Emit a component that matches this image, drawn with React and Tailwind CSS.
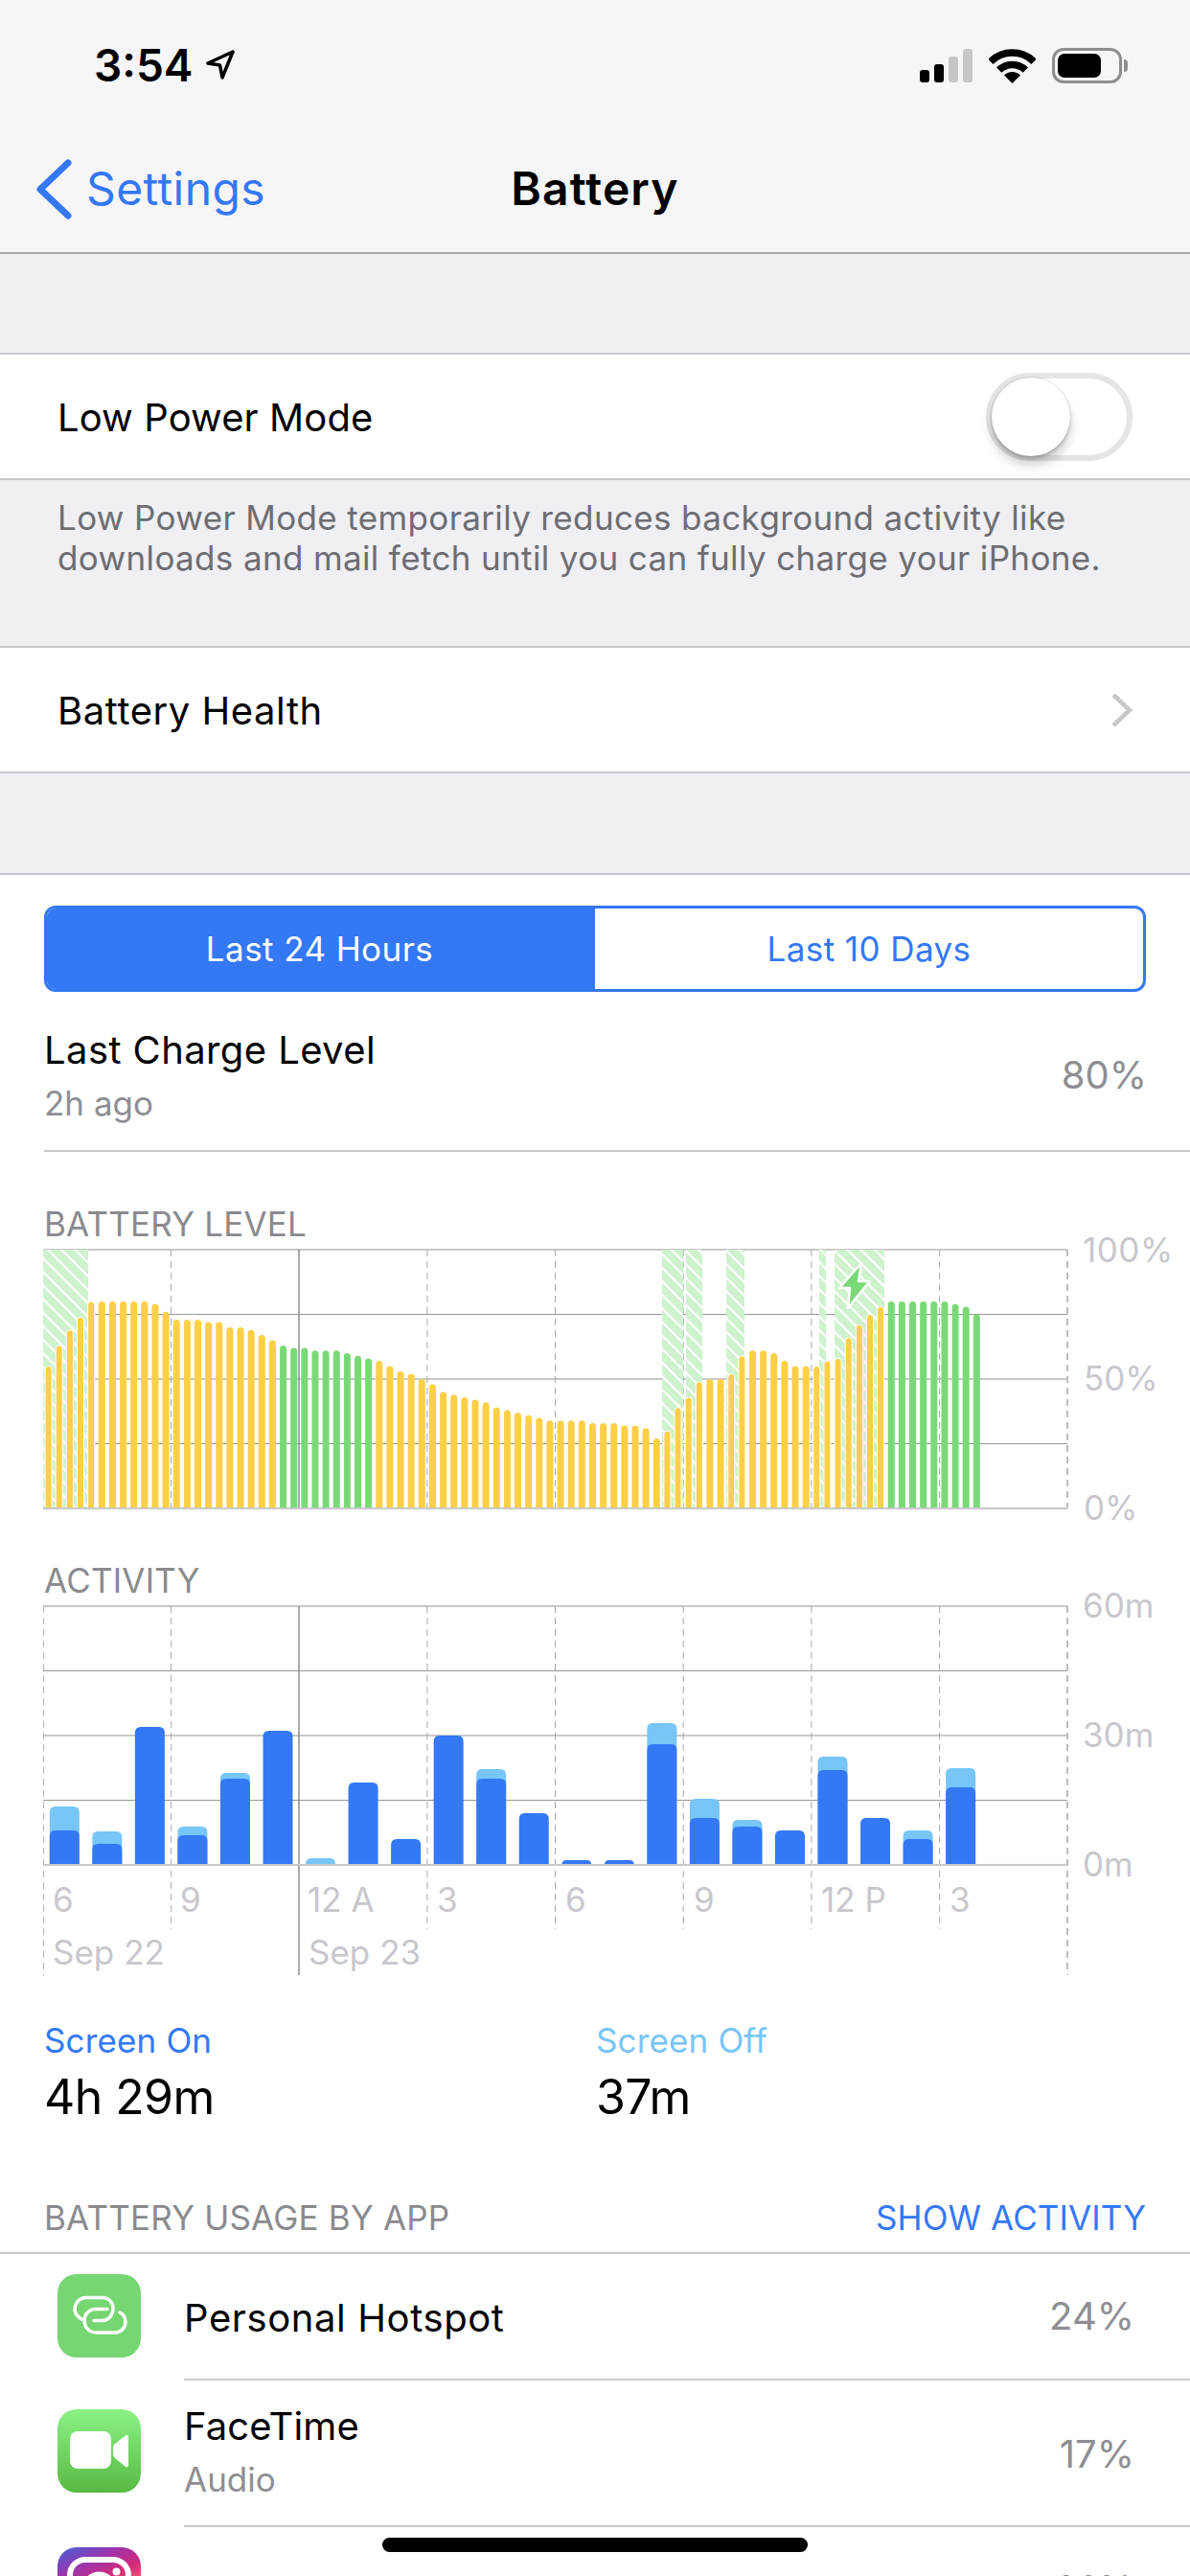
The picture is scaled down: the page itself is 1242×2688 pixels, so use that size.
import React from 'react';

const LEVELS = [
  55, 63, 69, 74, 80, 80, 80, 80, 80, 80, 79, 76, 73, 73, 73, 72, 72, 70, 70, 69, 67, 65,
  63, 62, 62, 61, 61, 61, 60, 59, 58, 57, 55, 53, 52, 50, 48, 45, 44, 43, 42, 41, 39, 38,
  37, 36, 35, 34, 34, 34, 34, 33, 33, 33, 32, 32, 31, 27, 30, 39, 43, 49, 50, 50, 52, 59,
  61, 61, 60, 57, 55, 55, 55, 57, 58, 66, 71, 75, 78, 80, 80, 80, 80, 80, 80, 79, 78, 75,
];

// [screen on px, total px] for every hour
const ACTIVITY = [
  [36, 61], [22, 35], [144, 144], [31, 40], [90, 96], [140, 140], [0, 7], [86, 86],
  [27, 27], [135, 135], [90, 100], [54, 54], [5, 5], [5, 5], [126, 148], [49, 69],
  [40, 47], [36, 36], [99, 113], [49, 49], [27, 36], [81, 101],
];

const CHARGING = [[45, 92], [691, 713], [716, 733], [758, 777], [855, 862], [871, 923]];
const GRID_X = [178.6, 445.9, 579.5, 713.2, 846.9, 980.6];

const topRounded = (x, y, w, h, r) => {
  const rr = Math.min(r, h);
  return `M${x} ${y + h}V${y + rr}Q${x} ${y} ${x + rr} ${y}H${x + w - rr}Q${x + w} ${y} ${x + w} ${y + rr}V${y + h}Z`;
};

const Grid = ({ dashEnd, longEnd }) => (
  <g>
    {[6, 141, 276].map((y) => (
      <line key={y} x1="45" x2="1114" y1={y} y2={y} stroke="#c8c8c8" strokeWidth="2" />
    ))}
    {[73.5, 208.5].map((y) => (
      <line key={y} x1="45" x2="1114" y1={y} y2={y} stroke="#969696" strokeWidth="1" />
    ))}
    {GRID_X.map((x) => (
      <line key={x} x1={x} x2={x} y1="6" y2={dashEnd} stroke="#a8a8a8" strokeWidth="1" strokeDasharray="7 5" />
    ))}
    <line x1="45.5" x2="45.5" y1="6" y2={longEnd} stroke="#b4b4b4" strokeWidth="1" strokeDasharray="7 5" />
    <line x1="1114" x2="1114" y1="6" y2={longEnd} stroke="#bcbcbc" strokeWidth="2" strokeDasharray="7 5" />
    <line x1="312" x2="312" y1="6" y2={longEnd} stroke="#8c8c8c" strokeWidth="1.5" />
  </g>
);

const BatteryChart = () => (
  <svg width="1242" height="296" className="block overflow-visible">
    <defs>
      <pattern id="hatch" width="10" height="10" patternUnits="userSpaceOnUse" patternTransform="rotate(-45)">
        <rect width="10" height="10" fill="#cdf2cd" />
        <rect width="2.2" height="10" fill="#ffffff" />
      </pattern>
    </defs>
    <Grid dashEnd={276} longEnd={276} />
    {CHARGING.map(([a, b]) => (
      <rect key={a} x={a} y="6" width={b - a} height="270" fill="url(#hatch)" />
    ))}
    {LEVELS.map((pct, i) => {
      const x = 47.1 + i * 11.135;
      const h = pct * 2.7;
      const green = (i >= 22 && i <= 30) || i >= 79;
      const overHatch = CHARGING.some(([a, b]) => x + 7 > a && x < b);
      return (
        <path
          key={i}
          d={topRounded(x, 276 - h, 7, h, 3.5)}
          fill={green ? '#7ad977' : '#fbcf47'}
          stroke={overHatch ? '#ffffff' : 'none'}
          strokeWidth="1"
        />
      );
    })}
    <line x1="45" x2="1114" y1="276" y2="276" stroke="#c8c8c8" strokeWidth="2" />
    <path d="M899 20L876 46L887 46L885 67L907.6 39L896 39Z" fill="#7ad977" stroke="#ffffff" strokeWidth="2.5" strokeLinejoin="round" />
    <text x="1130" y="19" className="fill-[#c8c7cc] text-[35px] tracking-[0.5px]">100%</text>
    <text x="1131" y="153" className="fill-[#c8c7cc] text-[35px]">50%</text>
    <text x="1131" y="288" className="fill-[#c8c7cc] text-[35px]">0%</text>
  </svg>
);

const ActivityChart = () => (
  <svg width="1242" height="391" className="block overflow-visible">
    <Grid dashEnd={343} longEnd={391} />
    {ACTIVITY.map(([on, total], i) => {
      const x = 51.8 + i * 44.54;
      return (
        <g key={i}>
          {total > on && <path d={topRounded(x, 276 - total, 31, total, 6)} fill="#78c5f7" />}
          {on > 0 && <path d={topRounded(x, 276 - on, 31, on, 6)} fill="#3478f6" />}
        </g>
      );
    })}
    <line x1="45" x2="1114" y1="276" y2="276" stroke="#c8c8c8" strokeWidth="2" />
    <text x="1130" y="18" className="fill-[#c8c7cc] text-[35px]">60m</text>
    <text x="1130" y="153" className="fill-[#c8c7cc] text-[35px]">30m</text>
    <text x="1130" y="288" className="fill-[#c8c7cc] text-[35px]">0m</text>
    {[[55, '6'], [188, '9'], [321, '12 A'], [456, '3'], [590, '6'], [724, '9'], [857, '12 P'], [991, '3']].map(([x, t]) => (
      <text key={x} x={x} y="325" className="fill-[#c8c7cc] text-[35px]">{t}</text>
    ))}
    <text x="55" y="380" className="fill-[#c8c7cc] text-[35px]">Sep 22</text>
    <text x="322" y="380" className="fill-[#c8c7cc] text-[35px]">Sep 23</text>
  </svg>
);

const StatusIcons = () => (
  <div className="flex items-center gap-[17px] mr-[65px]">
    <div className="flex items-end gap-[5px] h-[35px]">
      <div className="w-[10px] h-[13px] rounded-[3px] bg-black" />
      <div className="w-[10px] h-[19px] rounded-[3px] bg-black" />
      <div className="w-[10px] h-[27px] rounded-[3px] bg-[#c6c6c6]" />
      <div className="w-[10px] h-[35px] rounded-[3px] bg-[#c6c6c6]" />
    </div>
    <svg width="49" height="36" viewBox="0 0 49 36">
      <path d="M1.9 13.4A32 32 0 0 1 47.1 13.4" fill="none" stroke="#000" strokeWidth="7.5" />
      <path d="M10.7 22.2A19.5 19.5 0 0 1 38.3 22.2" fill="none" stroke="#000" strokeWidth="7.5" />
      <path d="M24.5 36L16 27.5A12 12 0 0 1 33 27.5Z" fill="#000" />
    </svg>
    <div className="flex items-center gap-[2px]">
      <div className="w-[73px] h-[37px] rounded-[12px] border-[3px] border-[#8e8e8e] pl-[3px] flex items-center">
        <div className="w-[45px] h-[25px] rounded-[7px] bg-black" />
      </div>
      <div className="w-[4px] h-[13px] rounded-r-full bg-[#8e8e8e]" />
    </div>
  </div>
);

const Header = () => (
  <div className="bg-[#f6f6f8] border-b-2 border-[#a9a9ad] h-[265px]">
    <div className="h-[137px] flex items-center">
      <span className="ml-[98px] text-[46px] font-semibold text-black">3:54</span>
      <svg width="31" height="31" viewBox="0 0 31 31" className="ml-[12px] mb-[2px]">
        <path d="M29 2L3 14L15.5 16L18 29Z" fill="none" stroke="#000" strokeWidth="3.5" strokeLinejoin="round" />
      </svg>
      <div className="ml-auto">
        <StatusIcons />
      </div>
    </div>
    <div className="h-[126px] grid grid-cols-3 items-center pb-[6px]">
      <div className="flex items-center pl-[38px]">
        <svg width="37" height="63" viewBox="0 0 37 63" fill="none">
          <path d="M33 4L4 31.5L33 59" stroke="#3478f6" strokeWidth="7" strokeLinecap="round" strokeLinejoin="round" />
        </svg>
        <span className="ml-[15px] text-[48px] tracking-[0.4px] text-[#3478f6]">Settings</span>
      </div>
      <span className="justify-self-center text-[48px] font-semibold tracking-[1.1px] text-black">Battery</span>
    </div>
  </div>
);

const Toggle = () => (
  <div className="w-[153px] h-[92px] rounded-full border-[6px] border-[#e5e5e5] bg-white flex items-center">
    <div className="w-[82px] h-[82px] rounded-full bg-white shadow-[0_9px_12px_rgba(0,0,0,0.2),0_3px_3px_rgba(0,0,0,0.12),0_0_2px_rgba(0,0,0,0.25)]" />
  </div>
);

const Settings = () => (
  <div className="bg-[#efeff4]">
    <div className="h-[103px]" />
    <div className="h-[133px] bg-white border-y-2 border-[#c8c7cc] flex items-center justify-between pl-[60px] pr-[60px]">
      <span className="mt-[3px] text-[40px] tracking-[0.1px] text-black">Low Power Mode</span>
      <Toggle />
    </div>
    <div className="h-[173px] pl-[60px] pt-[18px] text-[35px] leading-[42px] tracking-[0.36px] text-[#6d6d72]">
      <p>Low Power Mode temporarily reduces background activity like</p>
      <p>downloads and mail fetch until you can fully charge your iPhone.</p>
    </div>
    <div className="h-[133px] bg-white border-y-2 border-[#c8c7cc] flex items-center justify-between pl-[60px] pr-[60px]">
      <span className="mt-[3px] text-[40px] tracking-[0.55px] text-black">Battery Health</span>
      <svg width="23" height="38" viewBox="0 0 23 38" fill="none">
        <path d="M3 3L20 19L3 35" stroke="#c7c7cc" strokeWidth="4.5" />
      </svg>
    </div>
    <div className="h-[104px]" />
  </div>
);

const HotspotIcon = () => (
  <svg width="87" height="87" viewBox="0 0 87 87" fill="none" className="shrink-0">
    <rect width="87" height="87" rx="20" fill="#76d672" />
    <path d="M25 47C20.5 44 18 41 18 37C18 30 23 24.5 30 24.5H47C53 24.5 58 29 58 36C58 43 53 48.5 47 48.5H38" stroke="#fff" strokeWidth="3.5" strokeLinecap="round" />
    <path d="M65 40C69 42 71 46 71 50C71 56 66 61 60 61H40C33 61 28 55 28 48.5C28 42 33 36.5 40 36.5H52" stroke="#fff" strokeWidth="3.5" strokeLinecap="round" />
  </svg>
);

const FaceTimeIcon = () => (
  <svg width="87" height="87" viewBox="0 0 87 87" className="shrink-0">
    <defs>
      <linearGradient id="ft" x1="0" y1="0" x2="0" y2="1">
        <stop offset="0" stopColor="#8bf285" />
        <stop offset="1" stopColor="#58b942" />
      </linearGradient>
    </defs>
    <rect width="87" height="87" rx="20" fill="url(#ft)" />
    <rect x="13" y="23" width="43" height="39" rx="8" fill="#fff" />
    <path d="M58 40Q58 38 60 36L71 27.5Q74 25.5 74 29V58Q74 61.5 71 60L60 51Q58 49 58 47Z" fill="#fff" />
  </svg>
);

const InstagramIcon = () => (
  <svg width="87" height="87" viewBox="0 0 87 87" fill="none" className="shrink-0">
    <defs>
      <linearGradient id="ig" x1="0.1" y1="0" x2="0.6" y2="1">
        <stop offset="0" stopColor="#4f5bd5" />
        <stop offset="0.25" stopColor="#9a35ae" />
        <stop offset="0.5" stopColor="#d62976" />
        <stop offset="1" stopColor="#feda75" />
      </linearGradient>
    </defs>
    <rect width="87" height="87" rx="20" fill="url(#ig)" />
    <rect x="13" y="13" width="61" height="61" rx="16" stroke="#fff" strokeWidth="6" />
    <circle cx="43.5" cy="43.5" r="15" stroke="#fff" strokeWidth="6" />
    <circle cx="61.5" cy="25.5" r="4" fill="#fff" />
  </svg>
);

const AppRow = ({ icon, name, sub, pct, className, nameClass, iconClass }) => (
  <div className={`flex items-center pl-[60px] ${className}`}>
    <div className={iconClass}>{icon}</div>
    <div className="ml-[45px] flex-1 self-stretch border-b-2 border-[#c8c7cc] flex items-center justify-between pr-[58px]">
      <div className={sub ? 'mb-[3px]' : 'mt-[4px]'}>
        {name && <p className={`text-[40px] leading-[48px] text-black ${nameClass}`}>{name}</p>}
        {sub && <p className="mt-[10px] text-[35px] leading-[42px] text-[#8e8e93]">{sub}</p>}
      </div>
      <span className={`text-[40px] text-[#8e8e93] ${sub ? 'mt-[2px]' : ''}`}>{pct}</span>
    </div>
  </div>
);

export default function App() {
  return (
    <div className="relative w-[1242px] h-[2688px] overflow-hidden bg-white font-['Inter',sans-serif]">
      <Header />
      <Settings />

      <div className="border-t-2 border-[#c8c7cc] bg-white">
        {/* Range switch */}
        <div className="mt-[32px] mx-[46px] h-[90px] rounded-[12px] border-[3px] border-[#3478f6] grid grid-cols-2 overflow-hidden text-[35px] tracking-[0.42px]">
          <div className="bg-[#3478f6] text-white flex items-center justify-center pr-[3px]">Last 24 Hours</div>
          <div className="text-[#3478f6] flex items-center justify-center">Last 10 Days</div>
        </div>

        <div className="ml-[46px] h-[167px] border-b-2 border-[#c8c7cc] flex justify-between pr-[45px]">
          <div className="pt-[37px]">
            <p className="text-[40px] leading-[48px] tracking-[0.4px] text-black">Last Charge Level</p>
            <p className="mt-[10px] text-[35px] leading-[42px] text-[#8e8e93]">2h ago</p>
          </div>
          <p className="pt-[63px] text-[40px] leading-[48px] text-[#8e8e93]">80%</p>
        </div>

        <p className="mt-[55px] pl-[46px] text-[35px] leading-[41px] tracking-[0.2px] text-[#8a8a8e]">BATTERY LEVEL</p>
        <BatteryChart />
        <p className="mt-[35px] pl-[46px] text-[35px] leading-[41px] tracking-[0.2px] text-[#8a8a8e]">ACTIVITY</p>
        <ActivityChart />

        <div className="mt-[47px] pl-[46px] grid grid-cols-[576px_1fr]">
          <div>
            <p className="text-[35px] leading-[42px] tracking-[0.15px] text-[#3478f6]">Screen On</p>
            <p className="mt-[8px] text-[50px] leading-[60px] tracking-[-0.6px] text-black">4h 29m</p>
          </div>
          <div>
            <p className="text-[35px] leading-[42px] tracking-[0.15px] text-[#78c5f7]">Screen Off</p>
            <p className="mt-[8px] text-[50px] leading-[60px] tracking-[-0.6px] text-black">37m</p>
          </div>
        </div>

        <div className="mt-[75px] px-[46px] pb-[15px] border-b-2 border-[#c8c7cc] flex justify-between text-[35px] leading-[42px]">
          <span className="tracking-[0.2px] text-[#8a8a8e]">BATTERY USAGE BY APP</span>
          <span className="tracking-[0.1px] text-[#3478f6]">SHOW ACTIVITY</span>
        </div>

        <AppRow className="h-[132px]" iconClass="mb-[3px]" nameClass="tracking-[0.6px]" icon={<HotspotIcon />} name="Personal Hotspot" pct="24%" />
        <AppRow className="h-[153px]" iconClass="mb-[6px]" nameClass="tracking-[0.1px]" icon={<FaceTimeIcon />} name="FaceTime" sub="Audio" pct="17%" />
        <AppRow className="h-[132px]" iconClass="mb-[3px]" icon={<InstagramIcon />} pct="14%" />
      </div>

      <div className="absolute bottom-[25px] left-[399px] w-[444px] h-[15px] rounded-full bg-black" />
    </div>
  );
}
